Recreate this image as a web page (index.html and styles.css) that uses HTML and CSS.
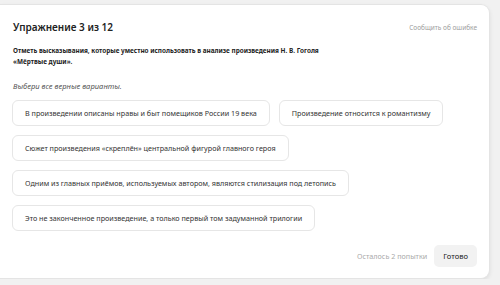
FILE: index.html
```html
<!DOCTYPE html>
<html lang="ru">
<head>
  <meta charset="UTF-8" />
  <title>Упражнение 3 из 12</title>
  <link rel="stylesheet" href="styles.css">
</head>
<body>
  <div class="card">
    <div class="card-head">
      <h2>Упражнение 3 из 12</h2>
      <a class="report" href="#">Сообщить об ошибке</a>
    </div>

    <p class="task">Отметь высказывания, которые уместно использовать в анализе произведения Н. В. Гоголя «Мёртвые души».</p>
    <p class="hint">Выбери все верные варианты.</p>

    <div class="options">
      <button class="option">В произведении описаны нравы и быт помещиков России 19 века</button>
      <button class="option">Произведение относится к романтизму</button>
      <button class="option">Сюжет произведения «скреплён» центральной фигурой главного героя</button>
      <button class="option">Одним из главных приёмов, используемых автором, являются стилизация под летопись</button>
      <button class="option">Это не законченное произведение, а только первый том задуманной трилогии</button>
    </div>

    <div class="card-foot">
      <span class="attempts">Осталось 2 попытки</span>
      <button class="done">Готово</button>
    </div>
  </div>
</body>
</html>
```

FILE: styles.css
```css
body {
  margin: 0;
  padding: 4px 10px 0 0;
  background: #f1f1f1;
  font-family: "Noto Sans", Arial, sans-serif;
  color: #222;
}
.card {
  background: white;
  border: 1px solid #e4e4e4;
  border-left: none;
  border-radius: 0 9px 9px 0;
  box-shadow: 0 2px 4px rgba(0, 0, 0, 0.08);
  padding: 14px 12px 11px 13px;
}
.card-head {
  display: flex;
  justify-content: space-between;
  align-items: center;
}
h2 {
  margin: 0;
  font-size: 10px;
  line-height: 16px;
  font-weight: 600;
}
.report {
  font-size: 6.5px;
  color: #a0a0a0;
  text-decoration: none;
}
.task {
  margin: 10px 0 0;
  max-width: 310px;
  font-size: 6.4px;
  line-height: 11px;
  font-weight: 700;
}
.hint {
  margin: 13px 0 0;
  font-size: 7.6px;
  line-height: 12px;
  font-style: italic;
  color: #555;
}
.options {
  display: flex;
  flex-wrap: wrap;
  gap: 9px;
  margin: 8px 0 0 -1px;
}
.option {
  height: 26px;
  padding: 0 12px;
  background: white;
  border: 1px solid #e6e6e6;
  border-radius: 6px;
  font-family: inherit;
  font-size: 7.2px;
  color: #333;
  cursor: pointer;
}
.card-foot {
  display: flex;
  justify-content: flex-end;
  align-items: center;
  gap: 7px;
  margin-top: 14px;
}
.attempts {
  font-size: 7.2px;
  color: #aaa;
}
.done {
  height: 22px;
  padding: 0 9px;
  background: #f2f2f2;
  border: none;
  border-radius: 5px;
  font-family: inherit;
  font-size: 7.6px;
  color: #222;
  cursor: pointer;
}
```
